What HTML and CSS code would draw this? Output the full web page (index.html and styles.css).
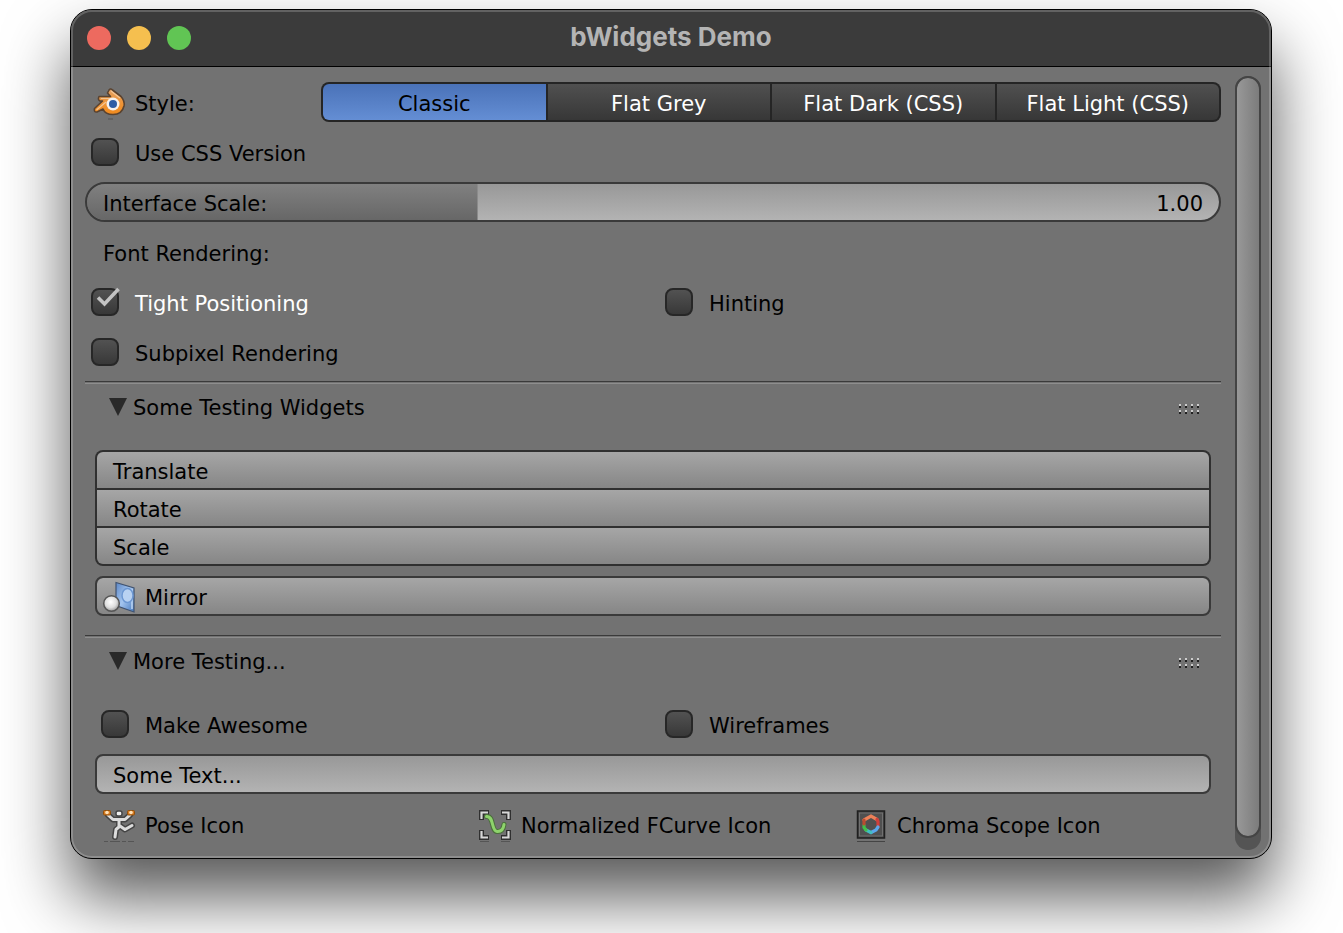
FILE: index.html
```html
<!DOCTYPE html>
<html lang="en">
<head>
<meta charset="utf-8">
<title>bWidgets Demo</title>
<link rel="stylesheet" href="styles.css">
</head>
<body>
<main class="window">
  <header class="titlebar">
    <div class="lights">
      <button class="light light-close" aria-label="Close"></button>
      <button class="light light-minimize" aria-label="Minimize"></button>
      <button class="light light-zoom" aria-label="Zoom"></button>
    </div>
    <h1 class="title">bWidgets Demo</h1>
  </header>
  <div class="body">
    <div class="content">
      <div class="rows">
        <div class="style-row">
          <div class="icon-label">
            <svg class="icon" viewBox="0 0 32 32" aria-hidden="true">
              <defs><linearGradient id="orange" x1="0" y1="0" x2="0" y2="1"><stop offset="0" stop-color="#e2a164"/><stop offset=".5" stop-color="#ee963c"/><stop offset="1" stop-color="#f08a1c"/></linearGradient></defs>
              <path d="M15.500 3Q17 -.5 19.500 2L28 8.500Q32 13 31 18Q29 26.500 20 26.500Q12 26.500 10 21L4 24Q.5 24.500 1.500 20.500L9.500 13H7Q4.500 12 6 8.500H17.500L14.500 5Z" fill="url(#orange)" stroke="#5a4330" stroke-width="1.600" stroke-linejoin="round"/>
              <path d="M8 10.500H20M3.500 22L13 14M18 3L27 10" fill="none" stroke="#f3c594" stroke-width="1.200"/>
              <circle cx="20" cy="16" r="6.500" fill="#f4f1ee"/>
              <circle cx="20" cy="16" r="4" fill="#2d5da6"/>
              <path d="M15 31H20" stroke="#555" stroke-width="1"/>
            </svg>
            <span>Style:</span>
          </div>
          <div class="segments" role="group" aria-label="Style">
            <button class="segment segment-active" aria-pressed="true">Classic</button>
            <button class="segment" aria-pressed="false">Flat Grey</button>
            <button class="segment" aria-pressed="false">Flat Dark (CSS)</button>
            <button class="segment" aria-pressed="false">Flat Light (CSS)</button>
          </div>
        </div>
        <label class="check"><input type="checkbox"><span>Use CSS Version</span></label>
        <div class="slider">
          <input class="slider-input" id="scale" type="range" min="0.5" max="1.95" step="0.05" value="1">
          <label class="slider-name" for="scale">Interface Scale:</label>
          <output class="slider-value" for="scale">1.00</output>
        </div>
        <div class="text-row">Font Rendering:</div>
        <div class="columns two">
          <label class="check"><input type="checkbox" checked><span>Tight Positioning</span>
            <svg class="tick" viewBox="0 0 28 28" aria-hidden="true"><path d="M7 9.500L13.500 16L27.500 1" fill="none" stroke="#c4c4c4" stroke-width="3.600"/></svg>
          </label>
          <label class="check"><input type="checkbox"><span>Hinting</span></label>
          <label class="check"><input type="checkbox"><span>Subpixel Rendering</span></label>
        </div>
      </div>

      <section class="panel">
        <button class="panel-header" aria-expanded="true">
          <svg class="arrow" viewBox="0 0 18 18" aria-hidden="true"><path d="M0 0H18L9 18Z" fill="#292929"/></svg>
          <span>Some Testing Widgets</span>
          <svg class="grip" viewBox="0 0 20 10" aria-hidden="true"><path d="M0 1H20M0 7H20" stroke="#ccc" stroke-width="2" stroke-dasharray="2 4"/><path d="M0 3H20M0 9H20" stroke="#202020" stroke-width="2" stroke-dasharray="2 4"/></svg>
        </button>
        <div class="panel-body rows">
          <div class="stack">
            <button class="push">Translate</button>
            <button class="push">Rotate</button>
            <button class="push">Scale</button>
          </div>
          <button class="push push-icon">
            <svg class="icon" viewBox="0 0 32 32" aria-hidden="true">
              <defs><linearGradient id="glass" x1="0" y1="0" x2="1" y2="1"><stop offset="0" stop-color="#5b86c5"/><stop offset=".5" stop-color="#a4c5ef"/><stop offset="1" stop-color="#477abf"/></linearGradient>
              <radialGradient id="ball" cx=".45" cy=".4" r=".6"><stop offset="0" stop-color="#fff"/><stop offset=".6" stop-color="#dedede"/><stop offset="1" stop-color="#999"/></radialGradient></defs>
              <path d="M13 .5L31 6V30L13 23.500Z" fill="url(#glass)" stroke="#405371" stroke-width="1.200"/>
              <path d="M29 7V27" stroke="#bdd6f5" stroke-width="1.500"/>
              <ellipse cx="24.500" cy="13.500" rx="5.500" ry="7" fill="#b9d2f2" stroke="#6d98d3" stroke-width="1.500"/>
              <circle cx="8.500" cy="21.500" r="7.800" fill="url(#ball)" stroke="#555" stroke-width="1.500"/>
            </svg>
            <span>Mirror</span>
          </button>
        </div>
      </section>

      <section class="panel">
        <button class="panel-header" aria-expanded="true">
          <svg class="arrow" viewBox="0 0 18 18" aria-hidden="true"><path d="M0 0H18L9 18Z" fill="#292929"/></svg>
          <span>More Testing...</span>
          <svg class="grip" viewBox="0 0 20 10" aria-hidden="true"><path d="M0 1H20M0 7H20" stroke="#ccc" stroke-width="2" stroke-dasharray="2 4"/><path d="M0 3H20M0 9H20" stroke="#202020" stroke-width="2" stroke-dasharray="2 4"/></svg>
        </button>
        <div class="panel-body rows">
          <div class="columns two">
            <label class="check"><input type="checkbox"><span>Make Awesome</span></label>
            <label class="check"><input type="checkbox"><span>Wireframes</span></label>
          </div>
          <input class="field" type="text" value="Some Text..." aria-label="Text">
          <div class="columns three">
            <div class="icon-label">
              <svg class="icon" viewBox="0 0 32 32" aria-hidden="true">
                <g fill="none" stroke-linecap="round" stroke-linejoin="round">
                  <path d="M5 5L10 9.500H22L27 5M16 10V16M17 16L13 19.500L12 27M17 16L22 19.500L29 15.500" stroke="#454545" stroke-width="6"/>
                  <path d="M5 5L10 9.500H22L27 5M16 10V16M17 16L13 19.500L12 27M17 16L22 19.500L29 15.500" stroke="#dcdcdc" stroke-width="3"/>
                </g>
                <rect x="13" y="1" width="6" height="5" rx="2" fill="#eee" stroke="#454545" stroke-width="1.500"/>
                <rect x=".5" y=".5" width="7" height="4.500" rx="1" fill="#d77b20" stroke="#914f0b"/><circle cx="4" cy="2.500" r="1.800" fill="#ffe2b8"/>
                <rect x="24.500" y=".5" width="7" height="4.500" rx="1" fill="#d77b20" stroke="#914f0b"/><circle cx="28" cy="2.500" r="1.800" fill="#ffe2b8"/>
                <path d="M1 31.500H31" stroke="#555" stroke-dasharray="4 2 10 2"/>
              </svg>
              <span>Pose Icon</span>
            </div>
            <div class="icon-label">
              <svg class="icon" viewBox="0 0 32 32" aria-hidden="true">
                <path d="M2.500 10V2.500H10M22 2.500H29.500V10M2.500 20V27.500H10M22 27.500H29.500V20" fill="none" stroke="#303030" stroke-width="5"/>
                <path d="M2.500 9V2.500H9M23 2.500H29.500V9M2.500 21V27.500H9M23 27.500H29.500V21" fill="none" stroke="#d8d8d8" stroke-width="2.200"/>
                <g fill="none" stroke-linecap="round"><path d="M7.500 6.500C15 5.500 12 21 18 21.500Q24 22 25 14.500" stroke="#4a6f3b" stroke-width="5"/>
                <path d="M7.500 6.500C15 5.500 12 21 18 21.500Q24 22 25 14.500" stroke="#8ed36c" stroke-width="3"/></g>
                <path d="M1 31.500H10M22 31.500H31" stroke="#555"/>
              </svg>
              <span>Normalized FCurve Icon</span>
            </div>
            <div class="icon-label">
              <svg class="icon" viewBox="0 0 32 32" aria-hidden="true">
                <rect x="2.500" y="1" width="27" height="27" fill="#444" stroke="#202020" stroke-width="1.500"/>
                <rect x="4.500" y="3" width="23" height="23" fill="#505050" stroke="#707070"/>
                <g fill="none" stroke-width="3.200" stroke-linecap="round">
                  <path d="M9 10L16 6L22 9.500" stroke="#ed8058"/>
                  <path d="M22 9.500L23 11.500V17" stroke="#ce3f3c"/>
                  <path d="M23 17L21 20L16 22.500" stroke="#5aa7ec"/>
                  <path d="M16 22.500L11 20" stroke="#42bdc2"/>
                  <path d="M11 20L9 17.500V15" stroke="#42bf4a"/>
                  <path d="M9 14V10" stroke="#b94c31"/>
                </g>
                <path d="M2 31.500H30" stroke="#444"/>
              </svg>
              <span>Chroma Scope Icon</span>
            </div>
          </div>
        </div>
      </section>
    </div>
    <div class="scrollbar" role="scrollbar" aria-label="Scroll" aria-orientation="vertical" aria-valuenow="0" aria-valuemin="0" aria-valuemax="100"><div class="thumb"></div></div>
  </div>
</main>
</body>
</html>
```
FILE: styles.css
```css
* { box-sizing: border-box; }

body {
  min-height: 100vh;
  margin: 0;
  padding: 9px 71px 0 70px;
  background: #fff;
  color: #000;
  font: 21px/24px "DejaVu Sans", sans-serif;
}

button, input {
  margin: 0;
  padding: 0;
  border: 0;
  background: none;
  color: inherit;
  font: inherit;
}

svg { display: block; flex: none; overflow: visible; }

.window {
  position: relative;
  border: 1px solid #000;
  border-radius: 22px;
  background: #727272;
  box-shadow: 0 38px 66px rgba(0, 0, 0, .66);
}

/* Light rim just inside the window edge */
.window::after {
  content: "";
  position: absolute;
  inset: 0;
  border: 2px solid rgba(255, 255, 255, .2);
  border-radius: 21px;
  pointer-events: none;
}

.titlebar {
  display: grid;
  grid-template-columns: 1fr auto 1fr;
  align-items: center;
  height: 57px;
  padding: 0 16px;
  border-bottom: 1px solid #000;
  border-radius: 21px 21px 0 0;
  background: #3b3b3b;
}

.lights { display: flex; gap: 16px; }
.light { width: 24px; height: 24px; border-radius: 50%; }
.light-close { background: #ed6a5f; }
.light-minimize { background: #f5bf4f; }
.light-zoom { background: #61c554; }

.title {
  margin: 0;
  padding-bottom: 2px;
  color: #b4b4b4;
  font: bold 26px/40px Inter, sans-serif;
}

.body {
  display: flex;
  gap: 14px;
  padding: 9px 10px 8px 14px;
}

.content { flex: 1; min-width: 0; padding: 6px 0; }

.rows { display: flex; flex-direction: column; gap: 10px; }

.style-row { display: grid; grid-template-columns: 224px 1fr; gap: 12px; }

.icon { width: 32px; height: 32px; }
.icon-label { display: flex; align-items: center; gap: 10px; height: 40px; padding: 4px 0 0 8px; white-space: nowrap; }

.segments {
  display: grid;
  grid-template-columns: repeat(4, 1fr);
  gap: 2px;
  padding: 2px;
  border-radius: 8px;
  background: #252525;
}
.segment { height: 36px; padding-top: 4px; background: linear-gradient(#505050, #373737); color: #fff; }
.segment:first-child { border-radius: 6px 0 0 6px; }
.segment:last-child { border-radius: 0 6px 6px 0; }
.segment-active { background: linear-gradient(#4a72b8, #648ed4); color: #000; }

.check {
  display: grid;
  grid-template-columns: 28px 1fr;
  align-items: center;
  gap: 16px;
  height: 40px;
  padding-left: 6px;
  white-space: nowrap;
}
.check input {
  appearance: none;
  grid-area: 1 / 1;
  width: 28px;
  height: 28px;
  border: 2px solid #272727;
  border-radius: 8px;
  background: linear-gradient(#525252, #383838);
}
.check span { grid-area: 1 / 2; padding-top: 4px; }
.check input:checked + span { color: #fff; }
.tick { grid-area: 1 / 1; width: 28px; height: 28px; pointer-events: none; }

.slider { display: grid; grid-template-columns: 1fr 1fr; align-items: center; height: 40px; }
.slider-input {
  appearance: none;
  grid-area: 1 / 1 / 2 / 3;
  width: 100%;
  height: 40px;
  border: 2px solid #3a3a3a;
  border-radius: 20px;
  background:
    linear-gradient(#808080, #676767) left / 34.5% 100% no-repeat padding-box,
    linear-gradient(#989898, #b3b3b3) padding-box;
}
.slider-input::-webkit-slider-thumb { appearance: none; width: 2px; height: 36px; background: none; }
.slider-name { grid-area: 1 / 1; padding: 4px 0 0 18px; pointer-events: none; z-index: 1; }
.slider-value { grid-area: 1 / 2; padding: 4px 18px 0 0; text-align: right; pointer-events: none; z-index: 1; }

.text-row { height: 40px; padding: 10px 0 0 18px; }

.columns { display: grid; gap: 10px 12px; }
.two { grid-template-columns: repeat(2, 1fr); }
.three { grid-template-columns: repeat(3, 1fr); }

.panel {
  margin-top: 9px;
  border-top: 1px solid #3a3a3a;
  box-shadow: inset 0 1px #727272, inset 0 2px #8e8e8e;
}
.panel + .panel { margin-top: 19px; }
.panel-header {
  display: flex;
  align-items: center;
  gap: 6px;
  width: 100%;
  height: 40px;
  margin-top: 5px;
  padding: 0 22px 0 24px;
}
.panel-header span { padding-top: 2px; }
.arrow { width: 18px; height: 18px; }
.grip { width: 20px; height: 10px; margin: 4px 0 0 auto; }
.panel-body { padding: 23px 10px 0; }

.push {
  height: 40px;
  padding: 4px 16px 0;
  border: 2px solid #3a3a3a;
  border-radius: 8px;
  background: linear-gradient(#a6a6a6, #868686) padding-box;
  text-align: left;
}
.push-icon { display: flex; align-items: center; gap: 10px; padding: 4px 6px 0; }

.stack {
  display: grid;
  gap: 2px;
  padding: 2px;
  border-radius: 8px;
  background: #303030;
}
.stack .push { height: 36px; border: 0; border-radius: 0; }
.stack .push:first-child { border-radius: 6px 6px 0 0; }
.stack .push:last-child { border-radius: 0 0 6px 6px; }

.field {
  width: 100%;
  height: 40px;
  padding: 4px 16px 0;
  border: 2px solid #3a3a3a;
  border-radius: 8px;
  background: linear-gradient(#989898, #b3b3b3) padding-box;
}

.scrollbar { width: 26px; padding-bottom: 12px; border-radius: 13px; background: #545454; }
.thumb {
  height: 100%;
  border: 2px solid #444;
  border-radius: 13px;
  background: linear-gradient(to right, #989898, #7c7c7c) padding-box;
}
```
